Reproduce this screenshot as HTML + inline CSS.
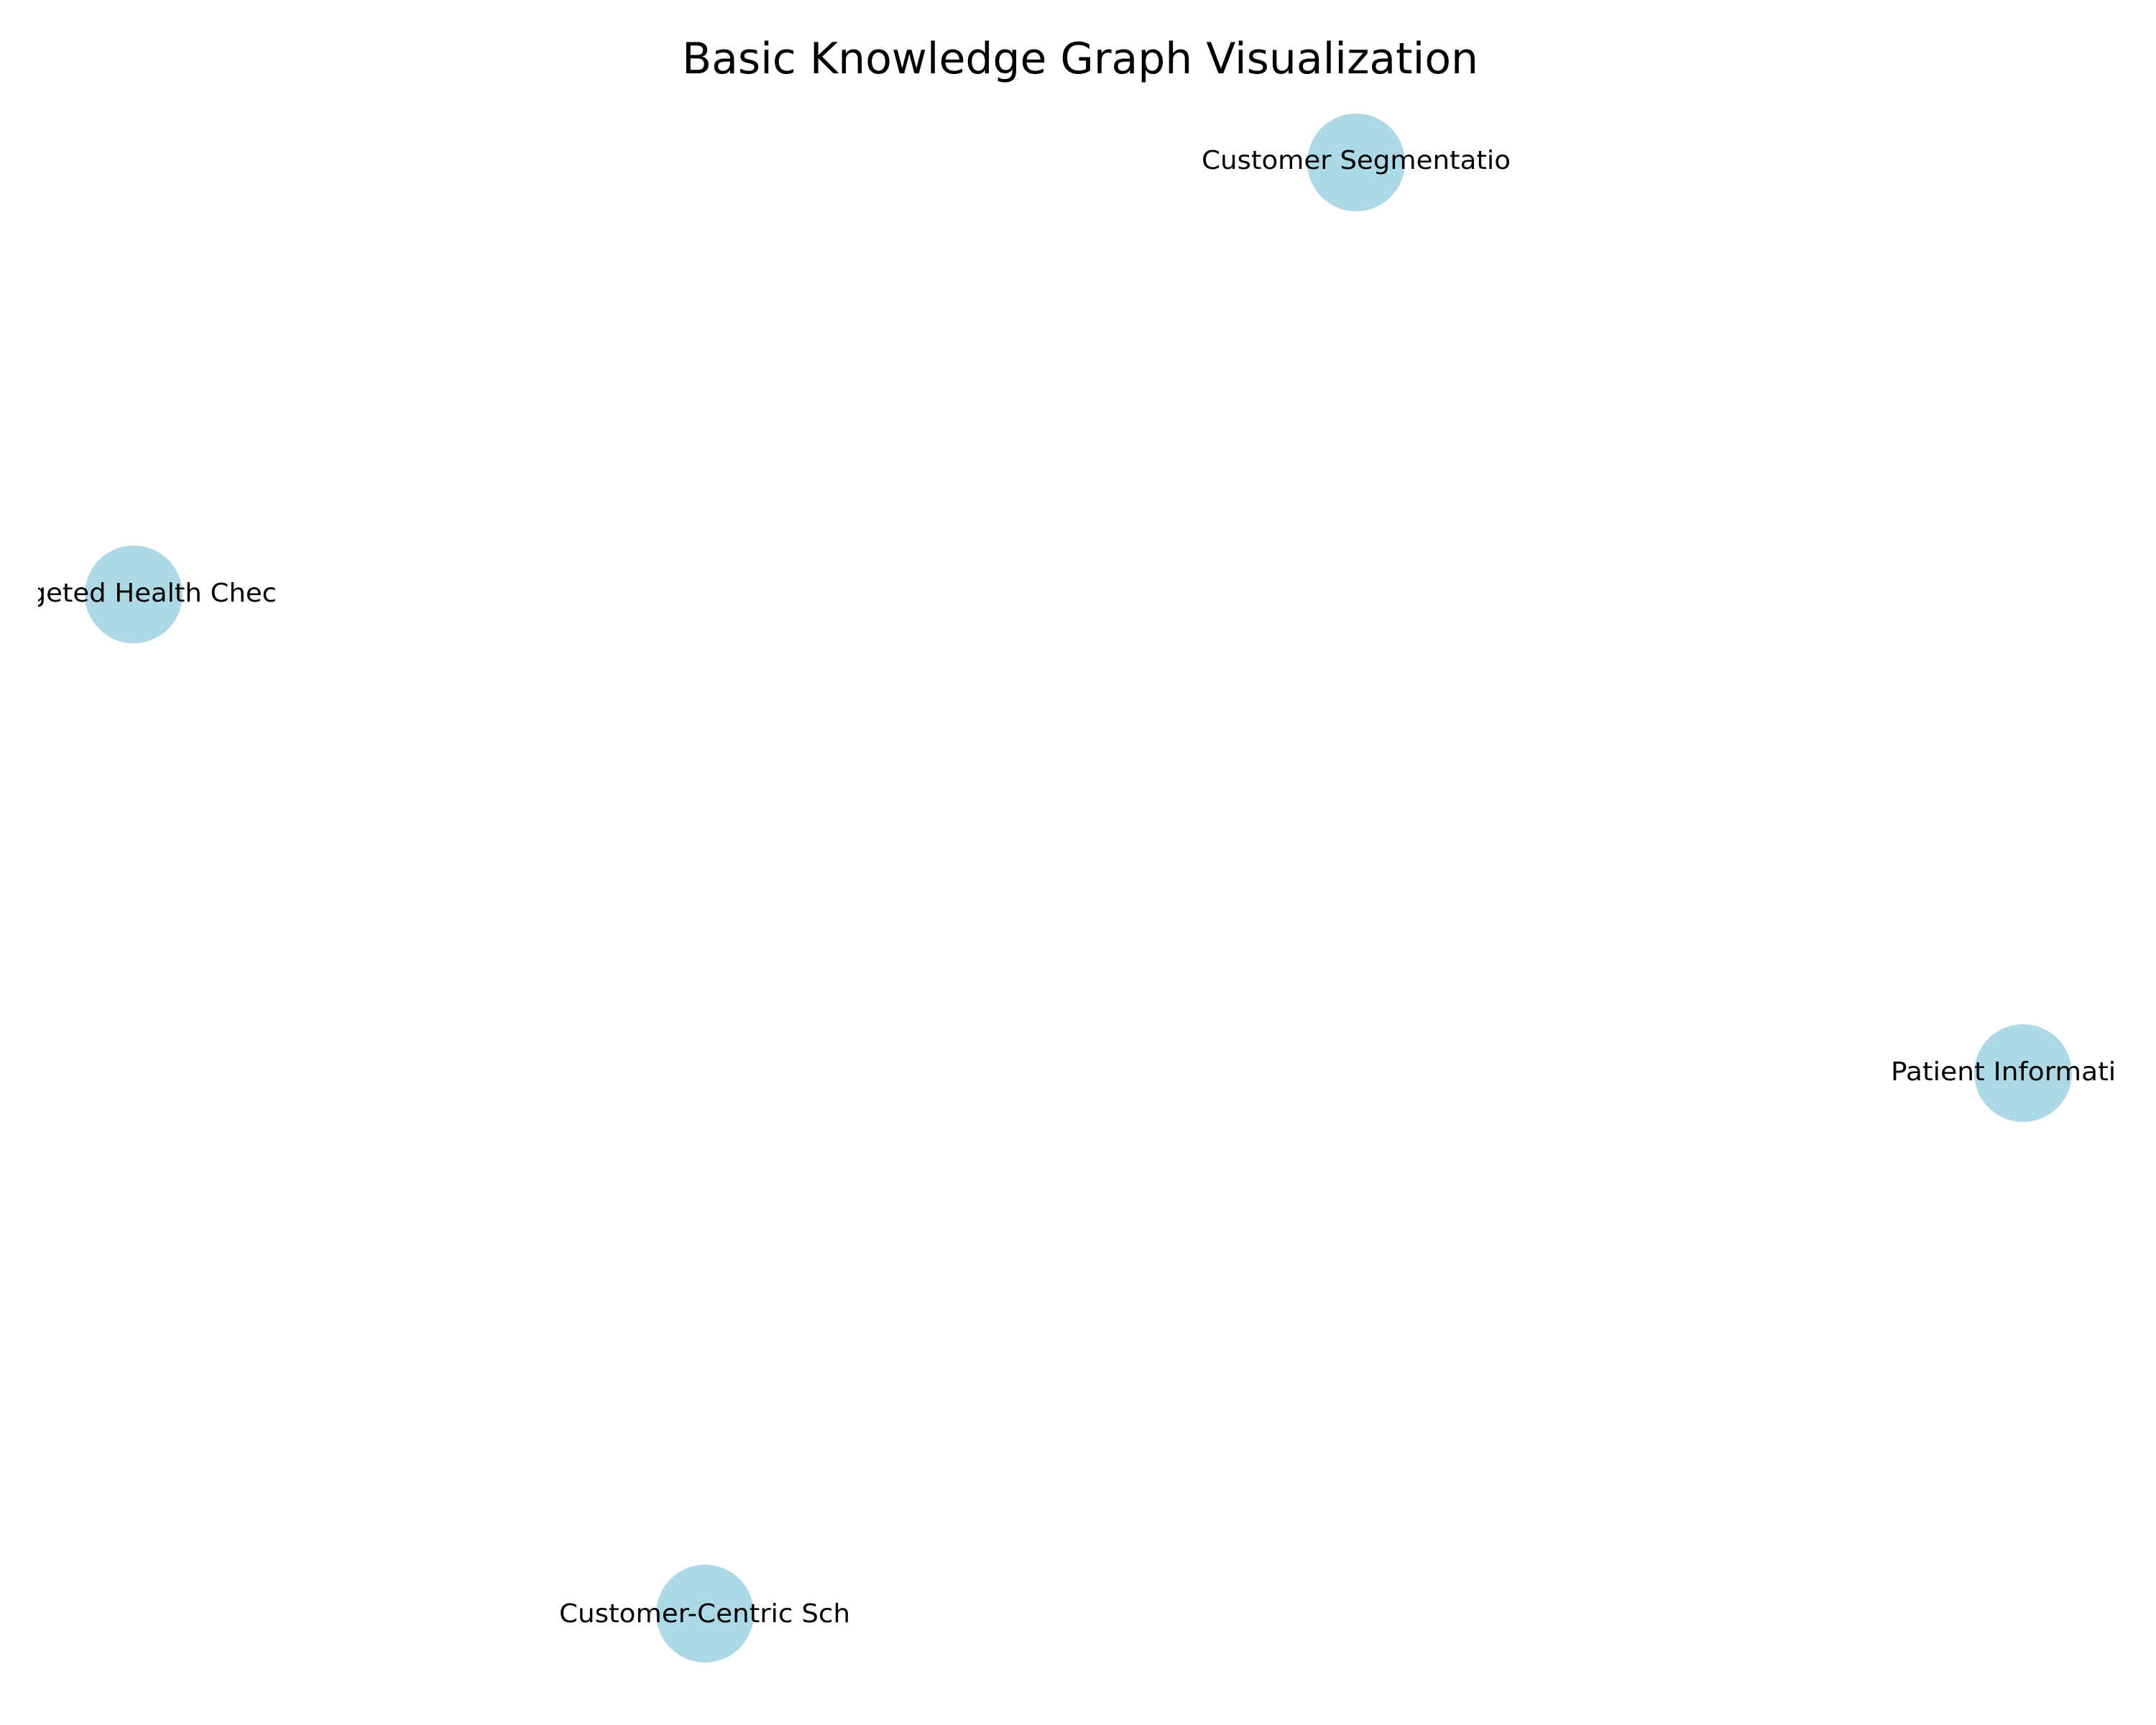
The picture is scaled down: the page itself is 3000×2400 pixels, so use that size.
<!DOCTYPE html>
<html><head><meta charset="utf-8"><style>
html,body{margin:0;padding:0;background:#fff;}
svg{display:block;}
text{font-family:"DejaVu Sans","Liberation Sans",sans-serif;fill:#000;}
</style></head><body>
<svg width="3000" height="2400" viewBox="0 0 3000 2400" xmlns="http://www.w3.org/2000/svg">
<defs><clipPath id="c"><rect x="53" y="0" width="2893" height="2400"/></clipPath></defs>
<rect width="3000" height="2400" fill="#fff"/>
<text x="1503" y="102" font-size="60" text-anchor="middle" textLength="1108" lengthAdjust="spacingAndGlyphs">Basic Knowledge Graph Visualization</text>
<g fill="#add8e6">
<circle cx="1887" cy="226" r="68"/>
<circle cx="186" cy="827" r="68"/>
<circle cx="2815" cy="1493" r="68"/>
<circle cx="981" cy="2245" r="68"/>
</g>
<g clip-path="url(#c)" font-size="36">
<text x="1672" y="235" textLength="430" lengthAdjust="spacingAndGlyphs">Customer Segmentatio</text>
<text x="-13" y="837" textLength="398" lengthAdjust="spacingAndGlyphs">Targeted Health Chec</text>
<text x="2631" y="1503" textLength="360" lengthAdjust="spacingAndGlyphs">Patient Information</text>
<text x="778" y="2257" textLength="405" lengthAdjust="spacingAndGlyphs">Customer-Centric Sch</text>
</g>
</svg>
</body></html>
